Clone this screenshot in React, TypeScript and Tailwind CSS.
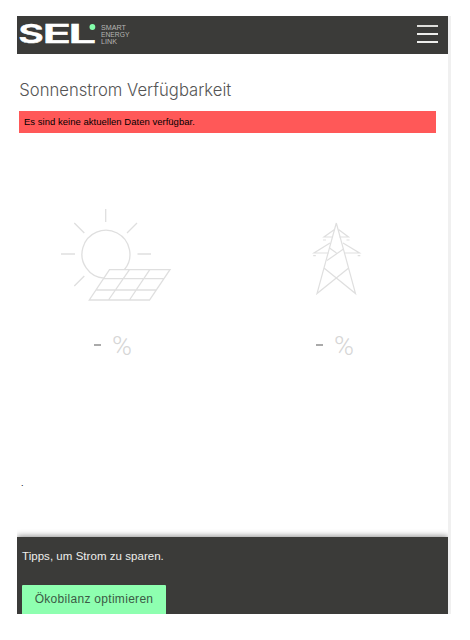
import type { ReactNode } from 'react';

function Logo() {
  return (
    <svg className="ml-[2px] h-[38px] w-[118px]" viewBox="0 0 118 38" aria-label="SEL Smart Energy Link">
      <g fill="#ffffff" stroke="#ffffff" strokeWidth="0.5" className="font-['Inter',sans-serif] font-semibold text-[26px]">
        <text x="-0.8" y="27.2" textLength="25.6" lengthAdjust="spacingAndGlyphs">S</text>
        <text x="23.4" y="27.2" textLength="28.6" lengthAdjust="spacingAndGlyphs">E</text>
        <text x="49.3" y="27.2" textLength="28" lengthAdjust="spacingAndGlyphs">L</text>
      </g>
      <circle cx="73.4" cy="11" r="2.9" fill="#84ffab" />
      <g fill="#b5b5b3" className="font-['Liberation_Sans',Arial,sans-serif] text-[6.8px]">
        <text x="82" y="13.5" textLength="25" lengthAdjust="spacingAndGlyphs">SMART</text>
        <text x="82" y="20.5" textLength="28.5" lengthAdjust="spacingAndGlyphs">ENERGY</text>
        <text x="82" y="27.5" textLength="16" lengthAdjust="spacingAndGlyphs">LINK</text>
      </g>
    </svg>
  );
}

function SolarIcon() {
  return (
    <svg className="h-[110px] w-[130px]" viewBox="0 0 130 110" fill="none" stroke="#dfdfdf" strokeWidth="1.3">
      <path d="M55.7 9v13M24.3 23l10 10M87 23l-10 10M11 54h14M87.5 54H101M34.3 76l-10 10" />
      <path d="M54 78.2A24 24 0 1 1 74.5 69.5" />
      <path d="M59.5 69.7H120L99.5 100H39.3ZM53.5 78.7h60M46.5 90h60M79.5 69.7l-21 30.3M99.8 69.7L79.5 100" />
    </svg>
  );
}

function PylonIcon() {
  return (
    <svg className="h-[95px] w-[80px]" viewBox="0 0 80 95" fill="none" stroke="#dfdfdf" strokeWidth="1.2">
      <path d="M36.3 13L17 83.5L48.7 58M36.3 13L55.5 83.5L24 58" />
      <path d="M34.5 19.5L24 27H33M38.5 19.5L48.5 27H39.5M30 33L14 43H28.5M43 33L59.5 43H44.5M29.5 38l7 5M43.5 39L27 50.5" />
      <path d="M23 30h3M46.5 30h3M13.2 45.7h2.6M57.7 45.7h2.6" />
    </svg>
  );
}

function Reading({ icon, className }: { icon: ReactNode; className: string }) {
  return (
    <div className={className}>
      {icon}
      <div className="flex h-[40px] items-center font-['Roboto',sans-serif] text-[25px] font-light leading-none text-[#d6d6d6]">
        <span className="mr-[11px] h-[1.5px] w-[7px] bg-[#aaaaaa]" />
        <span className="inline-block origin-left scale-x-[1.08] pt-[2px]">%</span>
      </div>
    </div>
  );
}

export default function App() {
  return (
    <div className="h-[640px] w-[470px] overflow-hidden bg-white pl-[17px] pt-4 font-['Liberation_Sans',Arial,sans-serif]">
      <div className="flex h-[598px] w-[434px]">
        <div className="flex w-[431px] flex-col">
          <header className="flex h-[38px] shrink-0 items-center justify-between bg-[#3b3b39] pr-[10px]">
            <Logo />
            <button aria-label="Menü" className="-mt-[2px] flex w-[21px] flex-col gap-[6px]">
              <span className="h-[2px] bg-[#dededb]" />
              <span className="h-[2px] bg-[#eeeeec]" />
              <span className="h-[2px] bg-[#eeeeec]" />
            </button>
          </header>
          <main className="flex h-[483px] shrink-0 flex-col">
            <h1 className="ml-[2px] mt-[24px] h-[24px] font-['Inter',sans-serif] text-[17px] font-light leading-[24px] text-[#555555]">
              <svg className="h-6 w-[220px] overflow-visible" fill="#555555">
                <text x="0.3" y="17.5" textLength="212" lengthAdjust="spacingAndGlyphs">Sonnenstrom Verfügbarkeit</text>
              </svg>
            </h1>
            <div className="ml-[2px] mt-[9px] h-[22px] w-[417px] bg-[#ff5858] pl-[5px] text-[9.5px] leading-[22px] tracking-[0.02px] text-black">
              Es sind keine aktuellen Daten verfügbar.
            </div>
            <div className="flex pt-[67px]">
              <Reading
                icon={<SolarIcon />}
                className="ml-[33px] flex w-[130px] flex-col gap-[15px] [&>div]:pl-[44px]"
              />
              <Reading
                icon={<PylonIcon />}
                className="ml-[120px] mt-[10px] flex w-[80px] flex-col gap-5 [&>div]:pl-[16px]"
              />
            </div>
            <p className="ml-[4px] mt-[112px] text-[9px] leading-3 text-black">.</p>
          </main>
          <footer className="flex h-[77px] shrink-0 flex-col items-start bg-[#3b3b39] pl-[5px] shadow-[0_-1px_6px_rgba(0,0,0,0.45)] [clip-path:inset(-12px_0_0_0)]">
            <p className="mt-[11px] h-[16px] text-[11.5px] leading-[16px] tracking-[0.04px] text-[#eeeeec]">
              Tipps, um Strom zu sparen.
            </p>
            <button className="mt-[21px] h-[29px] w-[144px] rounded-t-[1px] bg-[#8effb0] text-[12px] leading-[29px] tracking-[0.3px] text-[#3b5b45]">
              Ökobilanz optimieren
            </button>
          </footer>
        </div>
        <div className="w-[3px] bg-[#f0f0f0]" />
      </div>
    </div>
  );
}
